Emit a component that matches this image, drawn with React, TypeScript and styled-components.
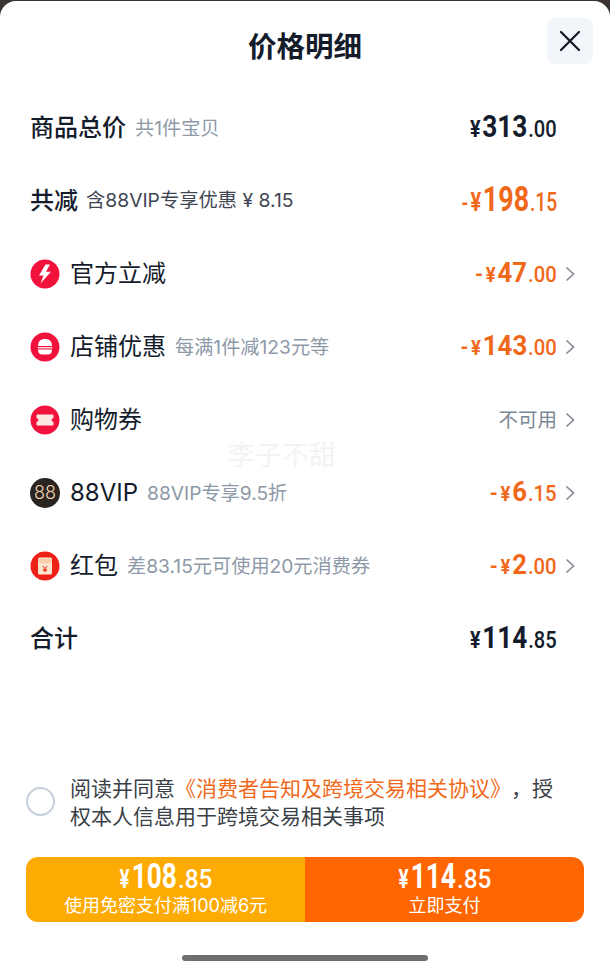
import styled, { createGlobalStyle } from "styled-components";

const cjk = `"Inter", "Noto Sans CJK SC", sans-serif`;
const num = `"Roboto", "Noto Sans CJK SC", sans-serif`;

const GlobalStyle = createGlobalStyle`
  html, body {
    margin: 0;
    background: #3b3431;
    font-family: ${cjk};
    text-spacing-trim: space-all;
  }
  * { box-sizing: border-box; }
`;

type Tone = "dark" | "orange";

const rows = [
  { label: "官方立减", icon: "bolt", amount: ["-", "47", "00"] },
  { label: "店铺优惠", sub: "每满1件减123元等", icon: "burger", amount: ["-", "143", "00"] },
  { label: "购物券", icon: "ticket", none: true },
  { label: "88VIP", sub: "88VIP专享9.5折", icon: "vip", amount: ["-", "6", "15"] },
  { label: "红包", sub: "差83.15元可使用20元消费券", icon: "packet", amount: ["-", "2", "00"] },
];

export default function App() {
  return (
    <>
      <GlobalStyle />
      <Sheet>
        <Header>
          <Title>价格明细</Title>
          <CloseButton aria-label="关闭">
            <svg width="22" height="22" viewBox="0 0 22 22">
              <path d="M2 2 L20 20 M20 2 L2 20" stroke="#111722" strokeWidth="2.2" strokeLinecap="round" />
            </svg>
          </CloseButton>
        </Header>

        <List>
          <Row>
            <Left>
              <StrongLabel>商品总价</StrongLabel>
              <Sub>共1件宝贝</Sub>
            </Left>
            <Price tone="dark" parts={["", "313", "00"]} size="large" />
            <ChevronSlot />
          </Row>
          <Row>
            <Left>
              <StrongLabel>共减</StrongLabel>
              <DarkSub>含88VIP专享优惠 ¥ 8.15</DarkSub>
            </Left>
            <Price tone="orange" parts={["-", "198", "15"]} size="huge" />
            <ChevronSlot />
          </Row>
          {rows.map((r) => (
            <Row key={r.label}>
              <Left>
                <Icon name={r.icon} />
                <Label>{r.label}</Label>
                {r.sub && <Sub>{r.sub}</Sub>}
              </Left>
              {r.none ? <Unavailable>不可用</Unavailable> : <Price tone="orange" parts={r.amount as string[]} size="normal" />}
              <ChevronSlot>
                <svg width="10" height="16" viewBox="0 0 10 16">
                  <path d="M1.5 1.5 L8.5 8 L1.5 14.5" fill="none" stroke="#868c94" strokeWidth="1.7" />
                </svg>
              </ChevronSlot>
            </Row>
          ))}
          <Row>
            <Left>
              <StrongLabel>合计</StrongLabel>
            </Left>
            <Price tone="dark" parts={["", "114", "85"]} size="large" />
            <ChevronSlot />
          </Row>
        </List>

        <Watermark>李子不甜</Watermark>

        <Agreement>
          <Radio />
          <AgreementText>
            阅读并同意<AgreementLink>《消费者告知及跨境交易相关协议》</AgreementLink>，授权本人信息用于跨境交易相关事项
          </AgreementText>
        </Agreement>

        <PayBar>
          <PayButton tone="#fdaa02">
            <PayPrice>
              <PayYen>¥</PayYen>
              <PayInt>108</PayInt>
              <PayDec>.85</PayDec>
            </PayPrice>
            <PayNote>使用免密支付满100减6元</PayNote>
          </PayButton>
          <PayButton tone="#ff6600">
            <PayPrice>
              <PayYen>¥</PayYen>
              <PayInt>114</PayInt>
              <PayDec>.85</PayDec>
            </PayPrice>
            <PayNote>立即支付</PayNote>
          </PayButton>
        </PayBar>

        <HomeBar />
      </Sheet>
    </>
  );
}

type Size = "normal" | "large" | "huge";

const sizes: Record<Size, { whole: number; dec: number; yen: number; squeeze: number }> = {
  normal: { whole: 28, dec: 22, yen: 20, squeeze: 0.92 },
  large: { whole: 32, dec: 24.5, yen: 24, squeeze: 0.82 },
  huge: { whole: 35, dec: 25, yen: 26, squeeze: 0.77 },
};

function Price({ tone, parts, size }: { tone: Tone; parts: string[]; size: Size }) {
  const [minus, whole, dec] = parts;
  return (
    <Amount tone={tone} size={size}>
      {minus && <Minus>-</Minus>}
      <Yen size={size}>¥</Yen>
      <Whole size={size}>{whole}</Whole>
      <Dec size={size}>.{dec}</Dec>
    </Amount>
  );
}

function Icon({ name }: { name: string }) {
  if (name === "vip") return <VipBadge>88</VipBadge>;
  return (
    <svg width="30" height="30" viewBox="0 0 30 30">
      <circle cx="15" cy="15" r="14.5" fill={name === "packet" ? "#ee2118" : "#f0123c"} />
      {name === "bolt" && <path d="M15.5 5.5 L9 16.5 H13.5 L10.5 24.5 L21 12.8 H16 L20 5.5 Z" fill="#fff" />}
      {name === "burger" && (
        <g fill="#fff">
          <path d="M8 14 C8 9.5 10.5 7 15 7 C19.5 7 22 9.5 22 14 Z" />
          <rect x="7.5" y="15" width="15" height="1.6" rx="0.8" fill="#fbd5da" />
          <path d="M8 17.6 H22 C22 20.8 20.6 22.5 18.5 22.5 H11.5 C9.4 22.5 8 20.8 8 17.6 Z" />
        </g>
      )}
      {name === "ticket" && (
        <path
          d="M7 10 H23 V13 A2 2 0 0 0 23 17 V20 H7 V17 A2 2 0 0 0 7 13 Z"
          fill="#fde7e2"
          stroke="#fde7e2"
          strokeLinejoin="round"
        />
      )}
      {name === "packet" && (
        <g>
          <rect x="8" y="6.5" width="14" height="17" rx="1.5" fill="#fde6cf" />
          <path d="M8 8 H22 V11 C18 13 12 13 8 11 Z" fill="#f7cfa8" />
          <path d="M12.8 15 L15 17.5 L17.2 15 M15 17.5 V21 M13 18.3 H17 M13 19.8 H17" fill="none" stroke="#e8321f" strokeWidth="1" />
        </g>
      )}
    </svg>
  );
}

const Sheet = styled.div`
  position: relative;
  margin-top: 1px;
  width: 610px;
  height: 972px;
  background: #fff;
  border-radius: 16px 16px 0 0;
  display: flex;
  flex-direction: column;
  overflow: hidden;
  color: #141c2b;
`;

const Header = styled.header`
  height: 90px;
  display: flex;
  justify-content: flex-end;
  align-items: flex-start;
  padding: 17px 17px 0 0;
  position: relative;
`;

const Title = styled.h1`
  position: absolute;
  left: 0;
  right: 0;
  top: 25px;
  margin: 0;
  text-align: center;
  font-size: 28.5px;
  line-height: 42px;
  font-weight: 700;
  color: #141c2b;
`;

const CloseButton = styled.button`
  width: 46px;
  height: 46px;
  border: none;
  border-radius: 8px;
  background: #f2f5f9;
  display: flex;
  align-items: center;
  justify-content: center;
  padding: 0;
`;

const List = styled.div`
  display: flex;
  flex-direction: column;
`;

const Row = styled.div`
  height: 73px;
  display: flex;
  align-items: center;
  padding: 0 27px 0 30px;
`;

const Left = styled.div`
  flex: 1;
  display: flex;
  align-items: center;
  min-width: 0;
`;

const Label = styled.span`
  font-size: 24px;
  line-height: 30px;
  margin-left: 10px;
  font-weight: 400;
  color: #141c2b;
`;

const StrongLabel = styled.span`
  font-size: 24px;
  line-height: 30px;
  font-weight: 500;
  color: #141c2b;
`;

const Sub = styled.span`
  font-size: 19.2px;
  margin-left: 9px;
  padding-bottom: 1px;
  font-weight: 400;
  color: #8e99a8;
`;

const DarkSub = styled.span`
  font-size: 19.3px;
  margin-left: 8px;
  padding-bottom: 3px;
  font-weight: 400;
  color: #3f4653;
`;

const Amount = styled.span<{ tone: Tone; size: Size }>`
  display: inline-flex;
  align-items: baseline;
  padding-bottom: 3px;
  font-family: ${num};
  font-weight: 700;
  transform: scaleX(${(p) => sizes[p.size].squeeze});
  transform-origin: right center;
  color: ${(p) => (p.tone === "orange" ? "#f0681a" : "#141c2b")};
`;

const Minus = styled.span`
  font-size: 22px;
  margin-right: 3px;
`;

const Yen = styled.span<{ size: Size }>`
  font-size: ${(p) => sizes[p.size].yen}px;
  margin-right: 2px;
`;

const Whole = styled.span<{ size: Size }>`
  font-size: ${(p) => sizes[p.size].whole}px;
`;

const Dec = styled.span<{ size: Size }>`
  font-size: ${(p) => sizes[p.size].dec}px;
  font-weight: 500;
  margin-left: 1px;
`;

const Unavailable = styled.span`
  font-size: 19.5px;
  padding-bottom: 3px;
  font-weight: 400;
  color: #7b8896;
`;

const ChevronSlot = styled.span`
  width: 26px;
  display: flex;
  justify-content: flex-end;
  padding-right: 8px;
`;

const VipBadge = styled.span`
  width: 30px;
  height: 30px;
  border-radius: 50%;
  background: #2b2420;
  color: #f0d5ae;
  font-family: "Inter", sans-serif;
  font-weight: 300;
  font-size: 18px;
  display: flex;
  align-items: center;
  justify-content: center;
`;

const Watermark = styled.div`
  position: absolute;
  left: 228px;
  top: 440px;
  font-size: 27px;
  line-height: 30px;
  color: #f3f3f4;
  pointer-events: none;
`;

const Agreement = styled.div`
  margin-top: 97px;
  display: flex;
  align-items: center;
  padding: 0 40px 0 26px;
`;

const Radio = styled.span`
  flex: none;
  width: 29px;
  height: 29px;
  border-radius: 50%;
  border: 2.5px solid #c6d0dc;
`;

const AgreementText = styled.p`
  margin: 0 0 0 15px;
  padding-top: 3px;
  font-size: 21px;
  line-height: 28px;
  font-weight: 400;
  color: #3a3f47;
`;

const AgreementLink = styled.span`
  color: #f0681a;
`;

const PayBar = styled.div`
  margin: 26px 26px 0;
  height: 65px;
  display: flex;
  border-radius: 12px;
  overflow: hidden;
`;

const PayButton = styled.div<{ tone: string }>`
  flex: 1;
  background: ${(p) => p.tone};
  color: #fff;
  display: flex;
  flex-direction: column;
  align-items: center;
  justify-content: flex-start;
  padding-top: 2px;
`;

const PayPrice = styled.div`
  font-family: ${num};
  font-weight: 500;
  height: 36px;
  line-height: 36px;
  transform: scaleX(0.75);
  white-space: nowrap;
`;

const PayYen = styled.span`
  font-size: 25px;
  font-weight: 700;
  margin-right: 3px;
`;

const PayInt = styled.span`
  font-size: 35px;
  font-weight: 700;
`;

const PayDec = styled.span`
  display: inline-block;
  font-size: 25px;
  margin-left: 1px;
  margin-right: 10px;
  transform: scaleX(1.3);
  transform-origin: left center;
`;

const PayNote = styled.div`
  font-size: 18px;
  line-height: 22px;
  font-weight: 400;
`;

const HomeBar = styled.div`
  margin: 33px auto 0;
  width: 246px;
  height: 6px;
  border-radius: 3px;
  background: #6f6f6f;
`;
